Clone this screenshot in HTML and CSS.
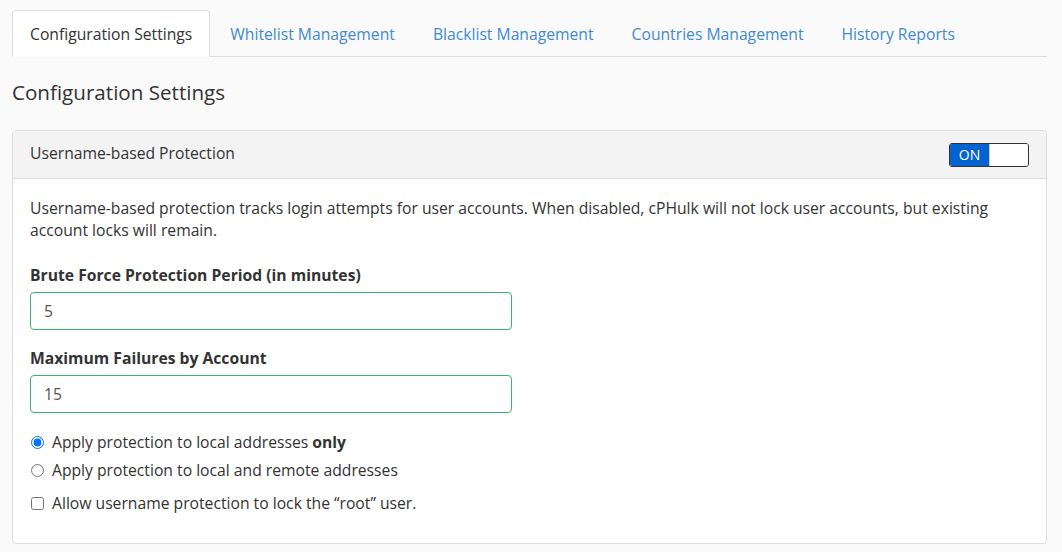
FILE: index.html
```html
<!DOCTYPE html>
<html>
<head>
<meta charset="utf-8">
<link rel="stylesheet" href="styles.css">
</head>
<body>
<div class="page">
  <ul class="tabs">
    <li class="tab active">Configuration Settings</li>
    <li class="tab">Whitelist Management</li>
    <li class="tab">Blacklist Management</li>
    <li class="tab">Countries Management</li>
    <li class="tab">History Reports</li>
  </ul>
  <h2 class="title">Configuration Settings</h2>
  <div class="panel">
    <div class="panel-head">
      <span class="head-text">Username-based Protection</span>
      <div class="toggle"><span class="on">ON</span><span class="off"></span></div>
    </div>
    <div class="panel-body">
      <p class="desc">Username-based protection tracks login attempts for user accounts. When disabled, cPHulk will not lock user accounts, but existing account locks will remain.</p>
      <div class="field">
        <label class="label">Brute Force Protection Period (in minutes)</label>
        <input class="input" type="text" value="5">
      </div>
      <div class="field">
        <label class="label">Maximum Failures by Account</label>
        <input class="input" type="text" value="15">
      </div>
      <div class="radios">
        <label class="opt"><input type="radio" name="scope" checked> <span>Apply protection to local addresses <b>only</b></span></label>
        <label class="opt"><input type="radio" name="scope"> <span>Apply protection to local and remote addresses</span></label>
      </div>
      <label class="opt check"><input type="checkbox"> <span>Allow username protection to lock the “root” user.</span></label>
    </div>
  </div>
</div>
</body>
</html>
```
FILE: styles.css
```css
html, body {
  margin: 0;
  padding: 0;
  background: #fafafa;
}
body {
  font-family: "Open Sans", "Liberation Sans", sans-serif;
  font-size: 15.7px;
  color: #333;
}
.page {
  padding: 10px 15px 0 12px;
}
.tabs {
  list-style: none;
  margin: 0;
  padding: 0;
  display: flex;
  border-bottom: 1px solid #ddd;
}
.tab {
  height: 45px;
  line-height: 47px;
  padding: 0 17px;
  margin-right: 2px;
  margin-bottom: -1px;
  color: #4189d1;
  border: 1px solid transparent;
  border-radius: 4px 4px 0 0;
}
.tab.active {
  color: #333;
  background: #fff;
  border-color: #ddd;
  border-bottom-color: #fff;
}
.title {
  font-size: 20.6px;
  font-weight: 500;
  margin: 21px 0 0 0;
  line-height: 28px;
}
.panel {
  margin-top: 24px;
  background: #fff;
  border: 1px solid #ddd;
  border-radius: 4px;
}
.panel-head {
  background: #f3f3f3;
  border-bottom: 1px solid #ddd;
  border-radius: 4px 4px 0 0;
  height: 48px;
  box-sizing: border-box;
  padding: 11px 17px 0 17px;
  display: flex;
  align-items: flex-start;
  justify-content: space-between;
}
.head-text {
  line-height: 22px;
}
.toggle {
  display: flex;
  width: 78px;
  height: 22px;
  border: 1px solid #333;
  border-radius: 3px;
  overflow: hidden;
  margin-top: 1px;
}
.toggle .on {
  width: 39px;
  background: #0563cf;
  color: #fff;
  font-size: 14px;
  text-align: center;
  line-height: 22px;
}
.toggle .off {
  flex: 1;
  background: #fff;
  border-left: 1px solid #ccc;
}
.panel-body {
  padding: 18px 17px 26px 17px;
}
.desc {
  margin: 0;
  line-height: 22px;
}
.field {
  margin-top: 23px;
}
.field + .field {
  margin-top: 17px;
}
.label {
  display: block;
  font-weight: 700;
  line-height: 22px;
  margin-bottom: 6px;
}
.input {
  display: block;
  box-sizing: border-box;
  width: 482px;
  height: 38px;
  border: 1px solid #3cb371;
  border-radius: 4px;
  padding: 0 13px;
  font-family: inherit;
  font-size: 15.7px;
  color: #555;
  background: #fff;
}
.radios {
  margin-top: 15px;
}
.opt {
  display: flex;
  align-items: center;
  height: 28px;
  line-height: 22px;
}
.opt input {
  margin: 0 8px 0 1px;
  width: 13px;
  height: 13px;
}
.opt.check {
  margin-top: 5px;
}
```
